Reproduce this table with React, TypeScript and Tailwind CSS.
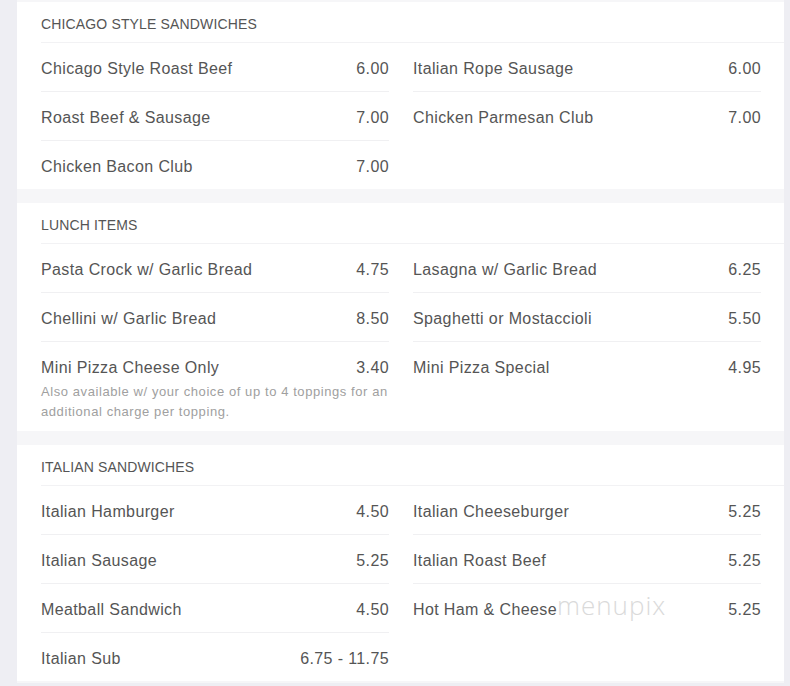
import React from "react";

type Item = { name: string; price: string; desc?: string };
type Section = { title: string; left: Item[]; right: Item[] };

const sections: Section[] = [
  {
    title: "CHICAGO STYLE SANDWICHES",
    left: [
      { name: "Chicago Style Roast Beef", price: "6.00" },
      { name: "Roast Beef & Sausage", price: "7.00" },
      { name: "Chicken Bacon Club", price: "7.00" },
    ],
    right: [
      { name: "Italian Rope Sausage", price: "6.00" },
      { name: "Chicken Parmesan Club", price: "7.00" },
    ],
  },
  {
    title: "LUNCH ITEMS",
    left: [
      { name: "Pasta Crock w/ Garlic Bread", price: "4.75" },
      { name: "Chellini w/ Garlic Bread", price: "8.50" },
      {
        name: "Mini Pizza Cheese Only",
        price: "3.40",
        desc: "Also available w/ your choice of up to 4 toppings for an additional charge per topping.",
      },
    ],
    right: [
      { name: "Lasagna w/ Garlic Bread", price: "6.25" },
      { name: "Spaghetti or Mostaccioli", price: "5.50" },
      { name: "Mini Pizza Special", price: "4.95" },
    ],
  },
  {
    title: "ITALIAN SANDWICHES",
    left: [
      { name: "Italian Hamburger", price: "4.50" },
      { name: "Italian Sausage", price: "5.25" },
      { name: "Meatball Sandwich", price: "4.50" },
      { name: "Italian Sub", price: "6.75 - 11.75" },
    ],
    right: [
      { name: "Italian Cheeseburger", price: "5.25" },
      { name: "Italian Roast Beef", price: "5.25" },
      { name: "Hot Ham & Cheese", price: "5.25" },
    ],
  },
];

function Row({ item }: { item: Item }) {
  return (
    <div className={item.desc ? "pt-[16px] pb-[9px]" : "pt-[16px] pb-[12px]"}>
      <div className="flex justify-between text-[16px] leading-[20px] tracking-[0.38px] text-[#555555]">
        <span>{item.name}</span>
        <span>{item.price}</span>
      </div>
      {item.desc && (
        <div className="mt-[4px] text-[13px] leading-[20px] tracking-[0.58px] text-[#a0a0a0]">
          {item.desc}
        </div>
      )}
    </div>
  );
}

function Column({ items }: { items: Item[] }) {
  return (
    <div className="flex flex-col divide-y divide-[#f0f0f2]">
      {items.map((it) => (
        <Row key={it.name} item={it} />
      ))}
    </div>
  );
}

export default function App() {
  return (
    <div
      className="min-h-[686px] w-[790px] bg-[#eeeef3] pl-[17px] pr-[6px]"
      style={{ fontFamily: '"Liberation Sans", Arial, sans-serif' }}
    >
      <div className="relative flex flex-col gap-[14px] bg-[#f6f6f8] pt-[2px] pb-[2px]">
        {sections.map((s) => (
          <div key={s.title} className="bg-white">
            <div className="ml-[24px] flex h-[41px] items-center border-b border-[#f2f2f4] pt-[5px] text-[14px] tracking-[0.15px] text-[#555555]">
              {s.title}
            </div>
            <div className="grid grid-cols-2 gap-x-[24px] pl-[24px] pr-[23px]">
              <Column items={s.left} />
              <Column items={s.right} />
            </div>
          </div>
        ))}
        <div
          className="pointer-events-none absolute left-[540px] top-[586px] text-[26px] tracking-[1px] text-[#dadada]"
          style={{ fontFamily: '"Open Sans", "Liberation Sans", sans-serif', fontWeight: 300 }}
        >
          menupix
        </div>
      </div>
    </div>
  );
}
